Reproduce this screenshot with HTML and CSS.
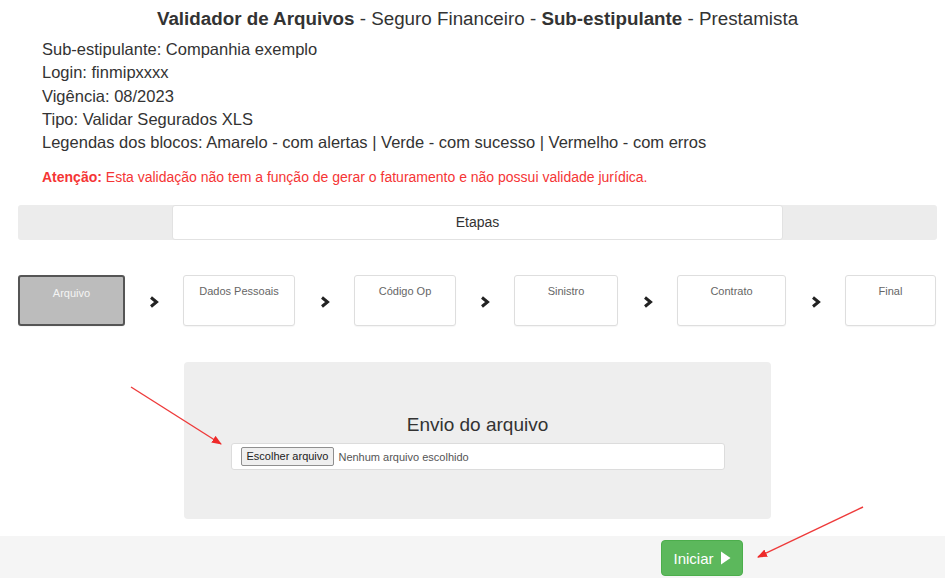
FILE: index.html
```html
<!DOCTYPE html>
<html lang="pt-BR">
<head>
<meta charset="utf-8">
<title>Validador de Arquivos</title>
<link rel="stylesheet" href="styles.css">
</head>
<body>
<div class="page">
  <h1 class="title"><b>Validador de Arquivos</b> - Seguro Financeiro - <b>Sub-estipulante</b> - Prestamista</h1>
  <div class="info">
    <p>Sub-estipulante: Companhia exemplo</p>
    <p>Login: finmipxxxx</p>
    <p>Vigência: 08/2023</p>
    <p>Tipo: Validar Segurados XLS</p>
    <p>Legendas dos blocos: Amarelo - com alertas | Verde - com sucesso | Vermelho - com erros</p>
  </div>
  <p class="warning"><b>Atenção:</b> Esta validação não tem a função de gerar o faturamento e não possui validade jurídica.</p>

  <div class="stagebar">
    <div class="stagebar-title">Etapas</div>
  </div>

  <div class="steps">
    <div class="step step-active">Arquivo</div>
    <div class="chev"><svg width="10" height="12" viewBox="0 0 10 12"><polyline points="2,1.5 7.5,6 2,10.5" fill="none" stroke="#222" stroke-width="3"/></svg></div>
    <div class="step">Dados Pessoais</div>
    <div class="chev"><svg width="10" height="12" viewBox="0 0 10 12"><polyline points="2,1.5 7.5,6 2,10.5" fill="none" stroke="#222" stroke-width="3"/></svg></div>
    <div class="step">Código Op</div>
    <div class="chev"><svg width="10" height="12" viewBox="0 0 10 12"><polyline points="2,1.5 7.5,6 2,10.5" fill="none" stroke="#222" stroke-width="3"/></svg></div>
    <div class="step">Sinistro</div>
    <div class="chev"><svg width="10" height="12" viewBox="0 0 10 12"><polyline points="2,1.5 7.5,6 2,10.5" fill="none" stroke="#222" stroke-width="3"/></svg></div>
    <div class="step">Contrato</div>
    <div class="chev"><svg width="10" height="12" viewBox="0 0 10 12"><polyline points="2,1.5 7.5,6 2,10.5" fill="none" stroke="#222" stroke-width="3"/></svg></div>
    <div class="step">Final</div>
  </div>

  <div class="upload">
    <h2 class="upload-title">Envio do arquivo</h2>
    <div class="file">
      <span class="file-btn">Escolher arquivo</span>
      <span class="file-name">Nenhum arquivo escolhido</span>
    </div>
  </div>
</div>

<div class="footer">
  <button class="btn-start">Iniciar <svg width="11" height="14" viewBox="0 0 11 14"><polygon points="1,0.5 10.5,7 1,13.5" fill="#fff"/></svg></button>
</div>

<svg class="annot" width="945" height="583" viewBox="0 0 945 583">
  <defs>
    <marker id="ah" markerWidth="10" markerHeight="8" refX="9" refY="4" orient="auto" markerUnits="userSpaceOnUse">
      <polygon points="0,0 10,4 0,8" fill="#ee2a2a"/>
    </marker>
  </defs>
  <line x1="131" y1="387" x2="221" y2="444" stroke="#ee3a3a" stroke-width="1.4" marker-end="url(#ah)"/>
  <line x1="863" y1="507" x2="758" y2="557" stroke="#ee3a3a" stroke-width="1.4" marker-end="url(#ah)"/>
</svg>
</body>
</html>
```

FILE: styles.css
```css
* { box-sizing: border-box; }
html, body { margin: 0; padding: 0; background: #fff; }
body {
  font-family: "Liberation Sans", Arial, sans-serif;
  color: #333;
  position: relative;
  width: 945px;
  height: 583px;
  overflow: hidden;
}
.page { padding: 0 8px 0 18px; }

.title {
  margin: 0;
  padding-top: 8px;
  font-size: 18.8px;
  font-weight: normal;
  line-height: 22px;
  text-align: center;
}
.title b { font-weight: bold; }

.info { padding-left: 24px; margin-top: 8px; }
.info p {
  margin: 0;
  font-size: 16.5px;
  line-height: 23.3px;
}

.warning {
  margin: 14px 0 0 24px;
  font-size: 14px;
  line-height: 18px;
  color: #f53535;
}

.stagebar {
  margin-top: 19px;
  background: #ececec;
  border-radius: 3px;
  height: 35px;
  display: flex;
  justify-content: center;
}
.stagebar-title {
  width: 611px;
  background: #fff;
  border: 1px solid #e2e2e2;
  border-radius: 3px;
  text-align: center;
  font-size: 14px;
  line-height: 32px;
  color: #333;
}

.steps {
  margin-top: 35px;
  display: grid;
  grid-template-columns: 107px 58px 112px 59px 102px 58px 104px 59px 109px 59px 91px;
  height: 51px;
}
.step {
  border: 1px solid #dedede;
  border-radius: 3px;
  background: #fff;
  font-size: 11px;
  color: #666;
  text-align: center;
  padding-top: 9px;
  box-shadow: 0 1px 1px rgba(0,0,0,0.04);
}
.step-active {
  background: #bcbcbc;
  border: 2px solid #555;
  color: #f4f4f4;
  padding-top: 10px;
}
.chev {
  display: flex;
  align-items: center;
  justify-content: center;
  padding-top: 2px;
}
.chev svg { display: block; }

.upload {
  width: 587px;
  margin: 36px auto 0;
  background: #eeeeee;
  border-radius: 4px;
  height: 157px;
  padding-top: 51px;
}
.upload-title {
  margin: 0;
  font-size: 19px;
  font-weight: normal;
  line-height: 24px;
  text-align: center;
  color: #333;
}
.file {
  margin: 6px auto 0;
  width: 494px;
  height: 27px;
  background: #fff;
  border: 1px solid #dcdcdc;
  border-radius: 3px;
  display: flex;
  align-items: center;
  padding-left: 9px;
  font-size: 11px;
}
.file-btn {
  display: inline-block;
  background: #efefef;
  border: 1px solid #8f8f8f;
  border-radius: 2px;
  padding: 1px 5px;
  line-height: 15px;
  color: #222;
}
.file-name { margin-left: 4px; color: #555; }

.footer {
  margin-top: 17px;
  background: #f5f5f5;
  height: 42px;
  padding: 4px 0 0 661px;
}
.btn-start {
  width: 82px;
  height: 36px;
  border: 1px solid #4cae4c;
  border-radius: 4px;
  background: #5cb85c;
  color: #fff;
  font-family: "Liberation Sans", Arial, sans-serif;
  font-size: 15px;
  display: flex;
  align-items: center;
  justify-content: center;
  gap: 6px;
  padding: 0;
}
.btn-start svg { display: block; }

.annot { position: absolute; left: 0; top: 0; pointer-events: none; }
```
